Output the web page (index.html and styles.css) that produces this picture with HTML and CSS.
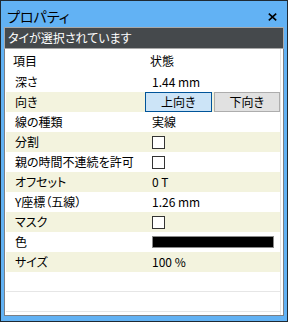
FILE: index.html
```html
<!DOCTYPE html>
<html lang="ja">
<head>
<meta charset="utf-8">
<link rel="stylesheet" href="styles.css">
</head>
<body>
<div class="window">
  <div class="titlebar">
    <span class="title">プロパティ</span>
    <svg class="close" width="9" height="8" viewBox="0 0 9 8"><path d="M0.8 0.6 L8.2 7.4 M8.2 0.6 L0.8 7.4" stroke="#000" stroke-width="1.6" fill="none"/></svg>
  </div>
  <div class="status">タイが選択されています</div>
  <div class="panel">
    <div class="table">
      <div class="row head"><div class="k">項目</div><div class="v">状態</div></div>
      <div class="row"><div class="k">深さ</div><div class="v">1.44 mm</div></div>
      <div class="row alt"><div class="k">向き</div><div class="v btns"><span class="btn on">上向き</span><span class="btn">下向き</span></div></div>
      <div class="row"><div class="k">線の種類</div><div class="v">実線</div></div>
      <div class="row alt"><div class="k">分割</div><div class="v"><span class="cb"></span></div></div>
      <div class="row"><div class="k">親の時間不連続を許可</div><div class="v"><span class="cb"></span></div></div>
      <div class="row alt"><div class="k">オフセット</div><div class="v">0 T</div></div>
      <div class="row"><div class="k">Y座標（五線）</div><div class="v">1.26 mm</div></div>
      <div class="row alt"><div class="k">マスク</div><div class="v"><span class="cb"></span></div></div>
      <div class="row"><div class="k">色</div><div class="v"><span class="swatch"></span></div></div>
      <div class="row alt"><div class="k">サイズ</div><div class="v">100 %</div></div>
      <div class="row empty"></div>
      <div class="row empty"></div>
    </div>
  </div>
</div>
</body>
</html>
```
FILE: styles.css
```css
* { box-sizing: border-box; }
html, body { margin: 0; padding: 0; }
body {
  font-family: "Noto Sans CJK JP", "Noto Sans", sans-serif;
  font-feature-settings: "palt";
  font-size: 12px;
  color: #000;
}
.window {
  width: 288px;
  height: 322px;
  border: 1px solid #1f2a33;
  background: #62b2f4;
  padding: 0 3px 5px 3px;
  display: flex;
  flex-direction: column;
}
.titlebar {
  height: 26px;
  display: flex;
  align-items: center;
  justify-content: space-between;
  padding: 0 7px 0 3px;
}
.title {
  font-size: 14px;
  line-height: 16px;
  margin-top: 4px;
}
.close { margin-top: 5px; }
.status {
  height: 22px;
  border: 1px solid #a8a8a8;
  background: #45494c;
  color: #fff;
  padding-left: 3px;
  line-height: 19px;
  font-size: 12px;
}
.panel {
  flex: 1;
  background: #fff;
  border: 1px solid #7c7f84;
  border-top: none;
  padding: 0 2px 0 1px;
}
.table {
  height: 100%;
  border-right: 1px solid #e4e4e4;
  overflow: hidden;
}
.row {
  display: flex;
  height: 20px;
  align-items: center;
  line-height: 20px;
}
.row.head { height: 23px; line-height: 23px; }
.row.alt { background: #f3f3de; }
.row.empty { border-bottom: 1px solid #e6e6e6; }
.k { width: 139px; padding-left: 9px; white-space: nowrap; }
.head .k { padding-left: 7px; }
.v { flex: 1; padding-left: 7px; white-space: nowrap; }
.head .v { padding-left: 5px; }
.v.btns { padding: 0; display: flex; gap: 2px; height: 20px; }
.btn {
  flex: 1;
  height: 20px;
  border: 1px solid #adadad;
  background: #e1e1e1;
  text-align: center;
  line-height: 18px;
}
.btn.on { border-color: #005499; background: #cce4f7; }
.cb {
  display: block;
  width: 13px;
  height: 13px;
  border: 1px solid #333;
  background: #fff;
}
.swatch {
  display: block;
  width: 122px;
  height: 12px;
  border: 1px solid #8a8a8a;
  background: #000;
}
```
